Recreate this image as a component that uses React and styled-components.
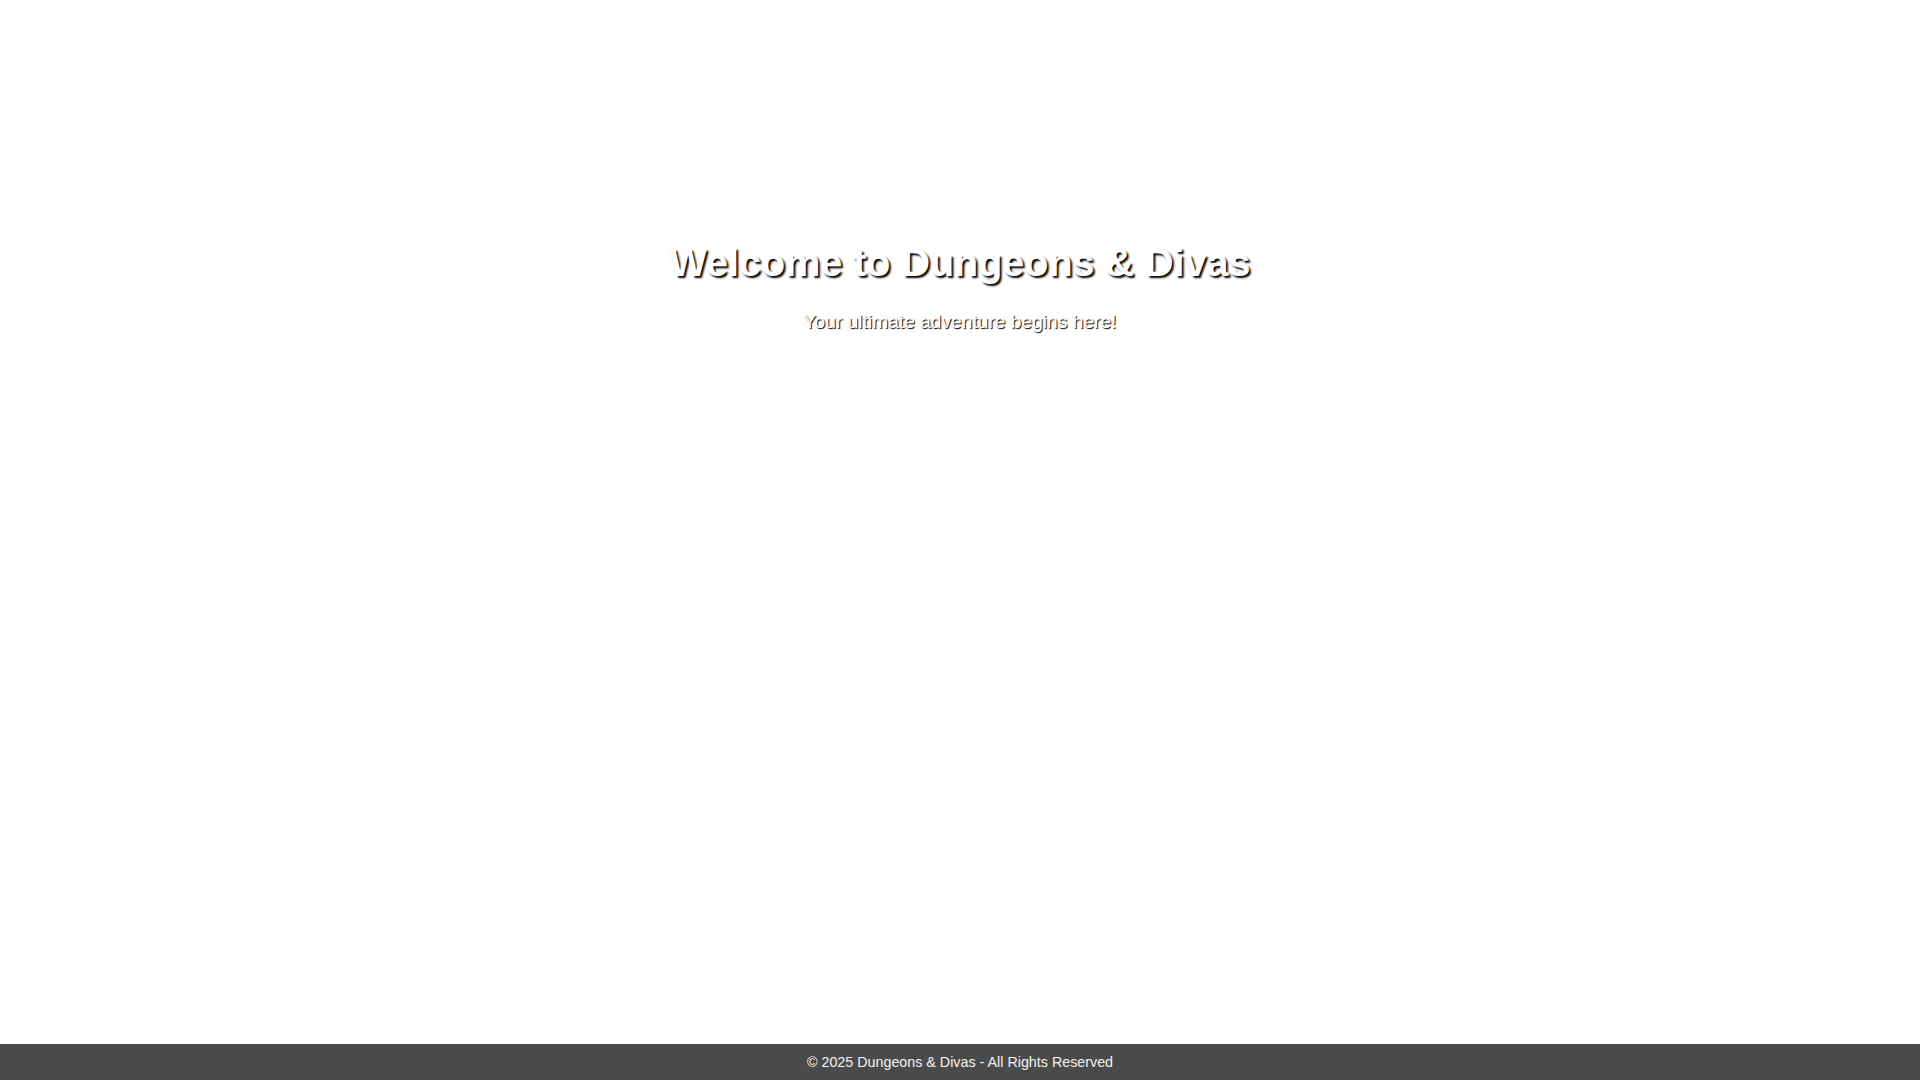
import React from "react";
import styled, { createGlobalStyle } from "styled-components";

const GlobalStyle = createGlobalStyle`
  html, body {
    margin: 0;
    padding: 0;
    background: #ffffff;
    font-family: "Liberation Sans", Arial, sans-serif;
  }
`;

const Page = styled.div`
  display: flex;
  flex-direction: column;
  min-height: 100vh;
`;

const Main = styled.main`
  flex: 1;
  display: flex;
  flex-direction: column;
  align-items: center;
  padding-top: 240px;
`;

const Title = styled.h1`
  margin: 0;
  font-size: 39.5px;
  font-weight: bold;
  color: #ffffff;
  text-shadow: 2px 2px 2px #000000;
`;

const Subtitle = styled.p`
  margin: 26px 0 0;
  font-size: 19.2px;
  color: #ffffff;
  text-shadow: 1px 1px 1px #000000;
`;

const Footer = styled.footer`
  background: #4a4a4a;
  color: #f2f2f2;
  text-align: center;
  font-size: 14.3px;
  padding: 10px 0;
`;

class App extends React.Component {
  render() {
    return (
      <Page>
        <GlobalStyle />
        <Main>
          <Title>Welcome to Dungeons &amp; Divas</Title>
          <Subtitle>Your ultimate adventure begins here!</Subtitle>
        </Main>
        <Footer>© 2025 Dungeons &amp; Divas - All Rights Reserved</Footer>
      </Page>
    );
  }
}

export default App;
